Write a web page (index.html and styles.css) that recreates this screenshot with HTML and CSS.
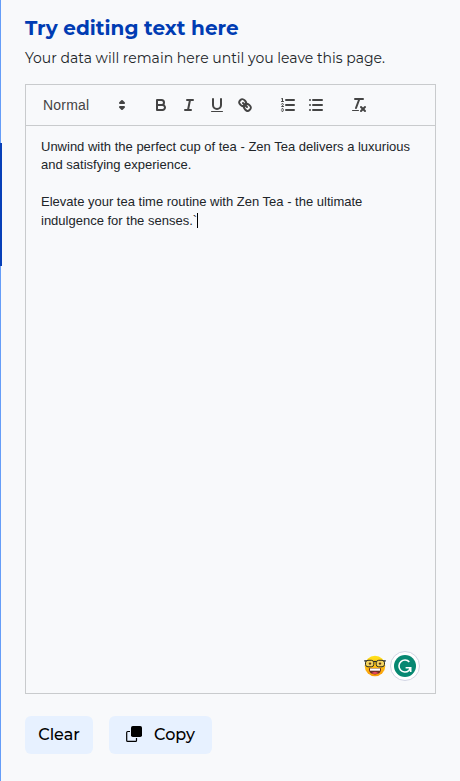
FILE: index.html
```html
<!DOCTYPE html>
<html lang="en">
<head>
    <meta charset="UTF-8">
    <meta name="viewport" content="width=device-width, initial-scale=1.0">
    <title>Text Editor</title>
    <link rel="stylesheet" href="styles.css">
</head>
<body>
    <div class="scroll-marker"></div>
    <main class="panel">
        <h1 class="title">Try editing text here</h1>
        <p class="subtitle">Your data will remain here until you leave this page.</p>
        <section class="editor">
            <div class="toolbar">
                <div class="formats picker">
                    <span>Normal</span>
                    <svg viewBox="0 0 18 18">
                        <polygon class="stroke fill" points="7 11 9 13 11 11 7 11"></polygon>
                        <polygon class="stroke fill" points="7 7 9 5 11 7 7 7"></polygon>
                    </svg>
                </div>
                <div class="formats">
                    <button class="tool" aria-label="Bold">
                        <svg viewBox="0 0 18 18">
                            <path class="stroke" d="M5,4H9.5A2.5,2.5,0,0,1,12,6.5v0A2.5,2.5,0,0,1,9.5,9H5A0,0,0,0,1,5,9V4A0,0,0,0,1,5,4Z"></path>
                            <path class="stroke" d="M5,9h5.5A2.5,2.5,0,0,1,13,11.5v0A2.5,2.5,0,0,1,10.5,14H5a0,0,0,0,1,0,0V9A0,0,0,0,1,5,9Z"></path>
                        </svg>
                    </button>
                    <button class="tool" aria-label="Italic">
                        <svg viewBox="0 0 18 18">
                            <line class="stroke" x1="7" x2="13" y1="4" y2="4"></line>
                            <line class="stroke" x1="5" x2="11" y1="14" y2="14"></line>
                            <line class="stroke" x1="8" x2="10" y1="14" y2="4"></line>
                        </svg>
                    </button>
                    <button class="tool" aria-label="Underline">
                        <svg viewBox="0 0 18 18">
                            <path class="stroke" d="M5,3V9a4.012,4.012,0,0,0,4,4H9a4.012,4.012,0,0,0,4-4V3"></path>
                            <rect class="fill" height="1" rx="0.5" ry="0.5" width="12" x="3" y="15"></rect>
                        </svg>
                    </button>
                    <button class="tool" aria-label="Link">
                        <svg viewBox="0 0 18 18">
                            <line class="stroke" x1="7" x2="11" y1="7" y2="11"></line>
                            <path class="stroke" d="M8.9,4.577a3.476,3.476,0,0,1,.36,4.679A3.476,3.476,0,0,1,4.577,8.9C3.185,7.5,2.035,6.4,4.217,4.217S7.5,3.185,8.9,4.577Z"></path>
                            <path class="stroke" d="M13.423,9.1a3.476,3.476,0,0,0-4.679-.36,3.476,3.476,0,0,0,.36,4.679c1.392,1.392,2.5,2.542,4.679.36S14.815,10.5,13.423,9.1Z"></path>
                        </svg>
                    </button>
                </div>
                <div class="formats">
                    <button class="tool" aria-label="Ordered list">
                        <svg viewBox="0 0 18 18">
                            <line class="stroke" x1="7" x2="15" y1="4" y2="4"></line>
                            <line class="stroke" x1="7" x2="15" y1="9" y2="9"></line>
                            <line class="stroke" x1="7" x2="15" y1="14" y2="14"></line>
                            <line class="stroke thin" x1="2.5" x2="4.5" y1="5.5" y2="5.5"></line>
                            <path class="fill" d="M3.5,6A0.5,0.5,0,0,1,3,5.5V3.085l-0.276.138A0.5,0.5,0,0,1,2.053,3c-0.124-.247-0.023-0.324.224-0.447l1-.5A0.5,0.5,0,0,1,4,2.5v3A0.5,0.5,0,0,1,3.5,6Z"></path>
                            <path class="stroke thin" d="M4.5,10.5h-2c0-.234,1.85-1.076,1.85-2.234A0.959,0.959,0,0,0,2.5,8.156"></path>
                            <path class="stroke thin" d="M2.5,14.846a0.959,0.959,0,0,0,1.85-.109A0.7,0.7,0,0,0,3.75,14a0.688,0.688,0,0,0,.6-0.736,0.959,0.959,0,0,0-1.85-.109"></path>
                        </svg>
                    </button>
                    <button class="tool" aria-label="Bullet list">
                        <svg viewBox="0 0 18 18">
                            <line class="stroke" x1="6" x2="15" y1="4" y2="4"></line>
                            <line class="stroke" x1="6" x2="15" y1="9" y2="9"></line>
                            <line class="stroke" x1="6" x2="15" y1="14" y2="14"></line>
                            <line class="stroke" x1="3" x2="3" y1="4" y2="4"></line>
                            <line class="stroke" x1="3" x2="3" y1="9" y2="9"></line>
                            <line class="stroke" x1="3" x2="3" y1="14" y2="14"></line>
                        </svg>
                    </button>
                </div>
                <div class="formats">
                    <button class="tool" aria-label="Clear formatting">
                        <svg viewBox="0 0 18 18">
                            <line class="stroke" x1="5" x2="13" y1="3" y2="3"></line>
                            <line class="stroke" x1="6" x2="9.35" y1="12" y2="3"></line>
                            <line class="stroke" x1="11" x2="15" y1="11" y2="15"></line>
                            <line class="stroke" x1="15" x2="11" y1="11" y2="15"></line>
                            <rect class="fill" height="1" rx="0.5" ry="0.5" width="7" x="2" y="14"></rect>
                        </svg>
                    </button>
                </div>
            </div>
            <div class="text-area">
                <p>Unwind with the perfect cup of tea - Zen Tea delivers a luxurious and satisfying experience.</p>
                <p><br></p>
                <p>Elevate your tea time routine with Zen Tea - the ultimate indulgence for the senses.`<span class="caret"></span></p>
                <div class="assistant">
                    <svg class="emoji" viewBox="0 0 22 22">
                        <defs>
                            <linearGradient id="face" x1="0" y1="0" x2="0" y2="1">
                                <stop offset="0" stop-color="#ffe31a"></stop>
                                <stop offset="1" stop-color="#fb9a0b"></stop>
                            </linearGradient>
                        </defs>
                        <circle cx="11" cy="11" r="10.3" fill="url(#face)"></circle>
                        <path d="M5 13.2h12c.4 4.200-2.600 6.200-6 6.200S4.600 17.400 5 13.200Z" fill="#6b2d22"></path>
                        <path d="M6 13.500h10v2.200H6Z" fill="#fff"></path>
                        <path d="M7.300 18.300q3.700-3 7.400 0-3.700 1.600-7.400 0Z" fill="#e8485c"></path>
                        <g fill="#f3d35e" stroke="#2c2c24" stroke-width="1">
                            <rect x="1.500" y="5.300" width="8.300" height="6.500" rx="2.500"></rect>
                            <rect x="12.200" y="5.300" width="8.300" height="6.500" rx="2.500"></rect>
                        </g>
                        <path d="M.2 5.800h2.300M19.500 5.800h2.300M9.800 6.800q1.200-.8 2.400 0" fill="none" stroke="#20262c" stroke-width="1.300"></path>
                        <circle cx="6" cy="8.600" r="1.200" fill="#5a351c"></circle>
                        <circle cx="16" cy="8.600" r="1.200" fill="#5a351c"></circle>
                    </svg>
                    <svg class="checker" viewBox="0 0 30 30">
                        <circle cx="15" cy="15" r="14.500" fill="#fff" stroke="#d2d5e4"></circle>
                        <circle cx="15" cy="15" r="11" fill="#078872"></circle>
                        <path d="M19.300 10.900A6 6 0 1 0 18.800 19.700L20.500 17M15.600 16.700h5.100v4.300" fill="none" stroke="#fff" stroke-width="1.600"></path>
                    </svg>
                </div>
            </div>
        </section>
        <div class="actions">
            <button class="button">Clear</button>
            <button class="button copy">
                <svg viewBox="0 0 16 16">
                    <path d="M4 5.500H1.600Q.7 5.500.7 6.400v8q0 .9.900.9h8q.9 0 .9-.9V12" fill="none" stroke="#000" stroke-width="1.200"></path>
                    <rect x="5" y="0" width="11" height="11" rx="1.800"></rect>
                </svg>
                <span>Copy</span>
            </button>
        </div>
    </main>
</body>
</html>
```
FILE: styles.css
```css
* {
    box-sizing: border-box;
}
body {
    margin: 0;
    height: 781px;
    overflow: hidden;
    background-color: #f8f9fb;
    border-left: 1px solid #659df8;
    color: #212529;
    font-family: Montserrat, Inter, sans-serif;
}
/* Dark segment laid over the left rule */
.scroll-marker {
    position: absolute;
    left: 0;
    top: 143px;
    width: 2px;
    height: 123px;
    background-color: #0840b8;
}
.panel {
    padding: 16px 24px 0;
}
.title {
    margin: 0;
    font-size: 20px;
    font-weight: 700;
    line-height: 24px;
    color: #003cb3;
    white-space: nowrap;
}
.subtitle {
    margin: 8px 0 15px;
    font-size: 14px;
    font-weight: 400;
    line-height: 21px;
    white-space: nowrap;
}

/* Editor */
.editor {
    width: 411px;
    height: 610px;
    display: flex;
    flex-direction: column;
    border: 1px solid #c9cbcd;
    font-family: "Liberation Sans", Arial, sans-serif;
}
.toolbar {
    display: flex;
    gap: 15px;
    height: 41px;
    padding: 8px;
    border-bottom: 1px solid #c9cbcd;
}
.formats {
    display: flex;
    height: 24px;
}
.picker {
    width: 98px;
    padding: 0 1px 0 9px;
    justify-content: space-between;
    align-items: center;
    color: #444;
    font-size: 14px;
    font-weight: 500;
    letter-spacing: 0.2px;
}
.picker svg {
    width: 18px;
    height: 18px;
}
.tool {
    width: 28px;
    height: 24px;
    padding: 3px 5px;
    border: none;
    background: none;
}
.tool svg {
    display: block;
    width: 18px;
    height: 18px;
}
.stroke {
    fill: none;
    stroke: #444;
    stroke-width: 2;
    stroke-linecap: round;
    stroke-linejoin: round;
}
.thin {
    stroke-width: 1;
}
.fill {
    fill: #444;
}
.text-area {
    position: relative;
    flex: 1;
    padding: 12px 15px;
    font-size: 13px;
    line-height: 18.46px;
}
.text-area p {
    margin: 0;
}
.caret {
    display: inline-block;
    width: 1px;
    height: 15px;
    vertical-align: -3px;
    background-color: #000;
}
.assistant {
    position: absolute;
    right: 15px;
    bottom: 12px;
    display: flex;
    align-items: center;
    gap: 4px;
}
.emoji {
    width: 22px;
    height: 22px;
}
.checker {
    width: 30px;
    height: 30px;
}

/* Buttons */
.actions {
    display: flex;
    gap: 16px;
    margin-top: 22px;
}
.button {
    display: flex;
    align-items: center;
    justify-content: center;
    width: 68px;
    height: 38px;
    padding: 0 0 2px;
    border: none;
    border-radius: 6px;
    background-color: #e7f1ff;
    color: #000;
    font-family: inherit;
    font-size: 16px;
    font-weight: 500;
}
.copy {
    width: 103px;
    gap: 12px;
}
.copy svg {
    width: 16px;
    height: 16px;
}
```
